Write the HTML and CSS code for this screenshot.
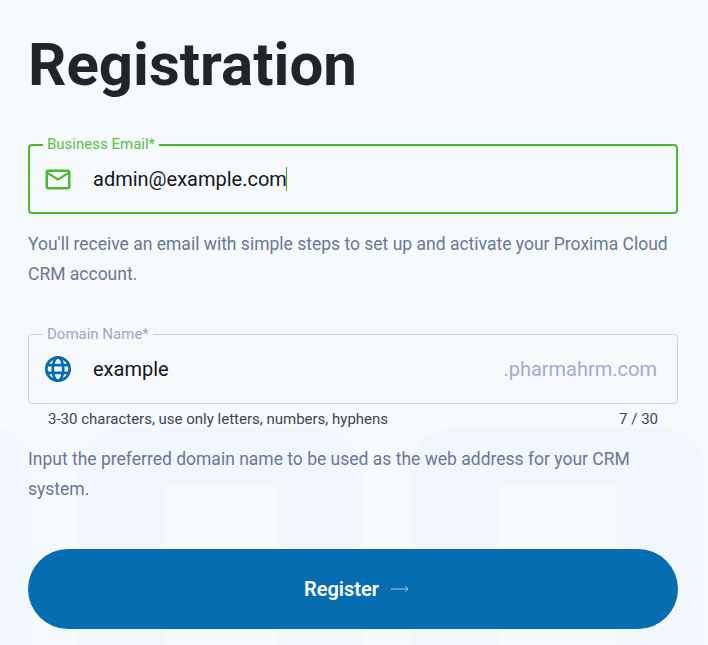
FILE: index.html
```html
<!DOCTYPE html>
<html>
<head>
    <title>Registration</title>
    <link rel="stylesheet" href="styles.css">
</head>
<body>
    <div class="decor">
        <div class="tile tile-a"></div>
        <div class="tile tile-b"><div class="hole"></div></div>
        <div class="tile tile-c"><div class="hole"></div></div>
    </div>
    <form class="card">
        <h1>Registration</h1>

        <div class="field field-active">
            <label>Business Email*</label>
            <span class="icon-slot">
                <svg width="31" height="31" viewBox="0 0 24 24" fill="#4cb82e">
                    <path d="M20 4H4c-1.100 0-2 .9-2 2v12c0 1.100.9 2 2 2h16c1.100 0 2-.9 2-2V6c0-1.100-.9-2-2-2zm0 14H4V8l8 5 8-5v10zm-8-7L4 6h16l-8 5z"/>
                </svg>
            </span>
            <span class="value">admin@example.com</span><span class="caret"></span>
        </div>
        <p class="note note-email">You'll receive an email with simple steps to set up and activate your Proxima Cloud CRM account.</p>

        <div class="field field-domain">
            <label>Domain Name*</label>
            <span class="icon-slot">
                <svg width="28" height="28" viewBox="0 0 24 24" fill="none" stroke="#066db0" stroke-width="2.300">
                    <circle cx="12" cy="12" r="10"/>
                    <ellipse cx="12" cy="12" rx="4.500" ry="10"/>
                    <path d="M2.500 8.700h19M2.500 15.300h19"/>
                </svg>
            </span>
            <span class="value">example</span>
            <span class="suffix">.pharmahrm.com</span>
        </div>
        <div class="hint">
            <span>3-30 characters, use only letters, numbers, hyphens</span>
            <span>7 / 30</span>
        </div>
        <p class="note note-domain">Input the preferred domain name to be used as the web address for your CRM system.</p>

        <button class="submit" type="button">
            Register
            <svg width="20" height="8" viewBox="0 0 20 8" fill="none" stroke="#a9cbe2" stroke-width="1">
                <path d="M1 4h17M15.500 1.500 18 4l-2.500 2.500"/>
            </svg>
        </button>
    </form>
</body>
</html>
```

FILE: styles.css
```css
* {
    box-sizing: border-box;
}
html, body {
    height: 100%;
}
body {
    position: relative;
    margin: 0;
    overflow: hidden;
    background-color: #f6fafd;
    font-family: Roboto, "Liberation Sans", sans-serif;
}
.decor {
    position: absolute;
    inset: 0;
    overflow: hidden;
}
.tile {
    position: absolute;
    top: 428px;
    height: 300px;
    border-radius: 42px 42px 0 0;
    background-color: #f2f6fd;
}
.tile-a {
    left: -260px;
    width: 293px;
}
.tile-b {
    left: 78px;
    width: 285px;
}
.tile-c {
    left: 410px;
    width: 295px;
}
.hole {
    position: absolute;
    top: 58px;
    height: 200px;
    background-color: #f6fafd;
}
.tile-b .hole {
    left: 87px;
    width: 112px;
}
.tile-c .hole {
    left: 88px;
    width: 119px;
}
.card {
    position: relative;
    display: flex;
    flex-direction: column;
    padding: 0 30px 0 28px;
}
h1 {
    margin: 30px 0 0;
    font-size: 60px;
    line-height: 70px;
    font-weight: 700;
    color: #212529;
}
.field {
    position: relative;
    display: flex;
    align-items: center;
    height: 70px;
    padding-right: 20px;
    border-radius: 4px;
}
.field label {
    position: absolute;
    padding: 0 4px;
    font-size: 15px;
    line-height: 16px;
    background-color: #f6fafd;
}
.field-active {
    margin-top: 44px;
    padding-left: 13px;
    border: 2px solid #4cb82e;
}
.field-active label {
    top: -10px;
    left: 13px;
    color: #5cc040;
}
.field-domain {
    margin-top: 45px;
    padding-left: 14px;
    border: 1px solid #ccd3ea;
}
.field-domain label {
    top: -9px;
    left: 14px;
    color: #a0a6c6;
}
.icon-slot {
    display: flex;
    justify-content: center;
    flex-shrink: 0;
    width: 30px;
    margin-right: 20px;
}
.value {
    font-size: 20px;
    line-height: 30px;
    color: #14161c;
}
.caret {
    width: 1px;
    height: 24px;
    margin-left: -1px;
    background-color: #3fa824;
}
.suffix {
    margin-left: auto;
    font-size: 20px;
    color: #a0acd0;
}
.note {
    margin: 0;
    font-size: 17.500px;
    line-height: 29.700px;
    color: #6b7795;
}
.note-email {
    margin-top: 16px;
}
.note-domain {
    margin-top: 18px;
}
.hint {
    display: flex;
    justify-content: space-between;
    padding: 7px 20px 0;
    font-size: 15px;
    line-height: 16px;
    color: #3e4450;
}
.submit {
    display: flex;
    align-items: center;
    justify-content: center;
    gap: 11px;
    height: 80px;
    margin-top: 44px;
    padding-left: 14px;
    border: 0;
    border-radius: 40px;
    background-color: #066db0;
    color: white;
    font-family: inherit;
    font-size: 20px;
    font-weight: 600;
}
```
